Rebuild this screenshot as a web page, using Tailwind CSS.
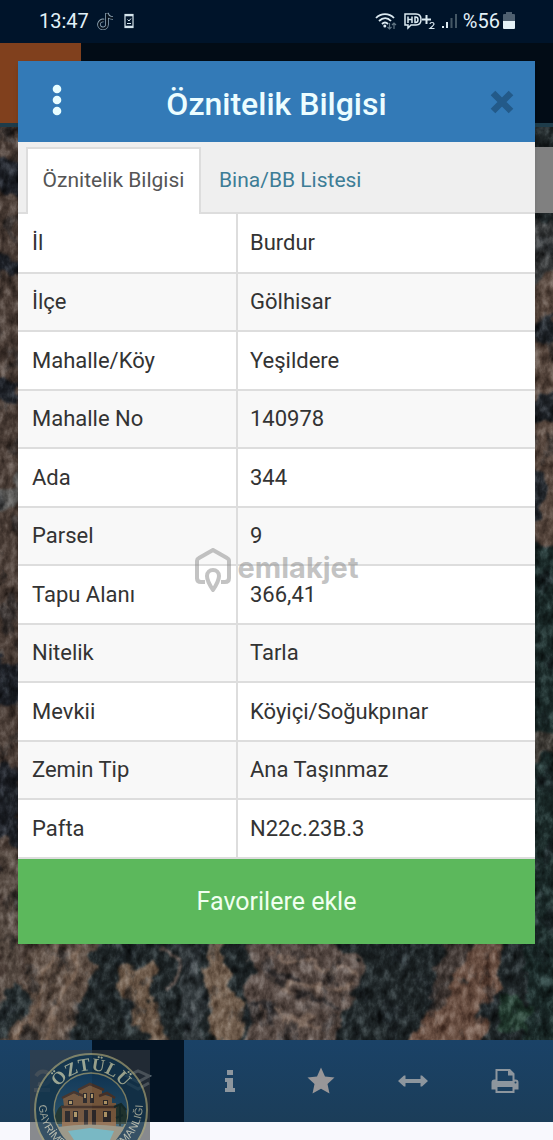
<!DOCTYPE html>
<html lang="tr">
<head>
    <meta charset="UTF-8">
    <meta name="viewport" content="width=device-width, initial-scale=1.0">
    <title>Öznitelik Bilgisi</title>
    <script src="https://cdn.jsdelivr.net/npm/@tailwindcss/browser@4"></script>
</head>
<body class="font-[Roboto,sans-serif] text-[#333]">

<div class="relative isolate flex min-h-screen flex-col overflow-hidden bg-[#25282a]">

    <!-- Uydu haritası -->
    <svg class="absolute inset-0 -z-10 h-full w-full" viewBox="0 0 553 1140" preserveAspectRatio="xMidYMid slice" aria-hidden="true">
        <defs>
            <filter id="rough" x="-10%" y="-10%" width="120%" height="120%" color-interpolation-filters="sRGB">
                <feTurbulence type="fractalNoise" baseFrequency="0.05" numOctaves="5" seed="4" result="n"/>
                <feDisplacementMap in="SourceGraphic" in2="n" scale="26" xChannelSelector="R" yChannelSelector="G"/>
                <feGaussianBlur stdDeviation="1"/>
            </filter>
            <filter id="grain" x="0" y="0" width="100%" height="100%" color-interpolation-filters="sRGB">
                <feTurbulence type="fractalNoise" baseFrequency="0.12 0.08" numOctaves="4" seed="9"/>
                <feColorMatrix type="matrix" values="0.9 0.9 0 0 -0.4  0.9 0.9 0 0 -0.4  0.9 0.9 0 0 -0.4  0 0 0 0 1"/>
            </filter>
            <filter id="shrubs" x="0" y="0" width="100%" height="100%" color-interpolation-filters="sRGB">
                <feTurbulence type="fractalNoise" baseFrequency="0.05 0.035" numOctaves="5" seed="21"/>
                <feColorMatrix type="matrix" values="0 0 0 0 0.1  0 0 0 0 0.12  0 0 0 0 0.14  6 0 0 0 -3.4"/>
            </filter>
        </defs>
        <rect width="553" height="1140" fill="#1f2628"/>
        <g filter="url(#rough)">
            <path d="M-20 120H40V1060H-20Z" fill="#4b3e37"/>
            <path d="M-10 150L25 165V200L-10 185ZM-10 250L30 262V275L-10 270ZM-10 375L22 385V400L-10 398ZM-10 655L22 665V700L-10 715ZM-10 760L20 770V850L-10 830Z" fill="#1c1f25"/>
            <path d="M-10 490L30 470V495L-10 515Z" fill="#5c5b59"/>
            <path d="M525 220H570V320L525 310Z" fill="#353738"/>
            <path d="M525 285L570 270V540L525 545Z" fill="#56463d"/>
            <path d="M525 330L565 315V345L525 340ZM525 400L560 390V425H525ZM525 470L545 480V520H525Z" fill="#202429"/>
            <path d="M525 545H570V1050H525Z" fill="#1a2928"/>
            <path d="M525 730H570V760H525Z" fill="#3d3a35"/>
            <path d="M0 850H18V980L0 1010Z" fill="#564a42"/>
            <path d="M35 930H98L88 985L65 1050H-5L20 990Z" fill="#5e4f45"/>
            <path d="M80 945L65 985L45 1045M55 940L45 985L15 1045" stroke="#7b6657" stroke-width="4" fill="none"/>
            <path d="M68 945L55 985L30 1045" stroke="#41362f" stroke-width="3" fill="none"/>
            <path d="M15 985L30 1000L10 1040H-5V1010Z" fill="#262e30"/>
            <path d="M118 965L155 962L150 1000L175 1045H145L136 1010L120 990Z" fill="#6d5a4a"/>
            <path d="M160 940L180 960L168 990" stroke="#665a55" stroke-width="5" fill="none"/>
            <path d="M182 940H202V1050H182Z" fill="#343b3e"/>
            <path d="M212 935H226V985L245 1000L240 1050H222L205 1000Z" fill="#725f4f"/>
            <path d="M248 940L310 935L370 965L350 1000L330 1050H250Z" fill="#5a4d47"/>
            <path d="M270 955L360 975M280 985L350 990M260 1010L320 1025" stroke="#7f6c60" stroke-width="4"/>
            <path d="M265 975L300 980M300 995L340 1010M255 1000L275 1020" stroke="#2d2929" stroke-width="6"/>
            <path d="M480 930H504L498 990L480 1010L485 1060H400L430 1010L455 985Z" fill="#694f42"/>
            <path d="M450 935L475 945L445 1000L425 1015Z" fill="#423935"/>
            <path d="M500 995L530 1000V1035H500Z" fill="#22392e"/>
        </g>
        <rect width="553" height="1140" filter="url(#shrubs)" opacity=".4"/>
        <rect width="553" height="1140" filter="url(#grain)" class="opacity-80 mix-blend-soft-light"/>
    </svg>

    <!-- Durum çubuğu -->
    <div class="flex h-[43px] items-center justify-between bg-[#00142a] pr-[38px] pb-0.5 pl-[39px] text-[#e2f1f8]">
        <div class="flex items-center gap-2">
            <time class="text-[20px] leading-6">13:47</time>
            <svg class="h-[18px] w-[18px]" viewBox="0 0 18 18" fill="none" aria-label="TikTok">
                <path d="M10 1V12.500A4 4 0 1 1 7 8.500M10 1C10.500 4 12.500 6 16 6" stroke="#8fa6b5" stroke-width="3.600"/>
                <path d="M10 1.500V12.500A4 4 0 1 1 7 8.700M10 2C10.500 4.300 12.500 6 16 6" stroke="#08131f" stroke-width="2"/>
            </svg>
            <svg class="h-4 w-3" viewBox="0 0 12 16" fill="none" stroke="#d5e5ed" aria-label="Cihaz">
                <rect x="2" y="1.500" width="8" height="13" stroke-width="1.200"/>
                <path d="M2 2.500H10M2 13.500H10" stroke-width="1.500"/>
                <path d="M4.500 6.500L6 8L8 5.500M4 10.500H8" stroke-width="1"/>
            </svg>
        </div>
        <div class="flex items-center gap-[6px]">
            <svg class="h-[18px] w-[22px]" viewBox="0 0 22 18" fill="none" aria-label="Wi-Fi">
                <path d="M1 6C6 .8 14 .8 19 6M4 9C8 5.200 12.500 5.200 16 9M7 12C9 10 11 10 13 12" stroke="#dceaf1" stroke-width="1.800"/>
                <circle cx="9.800" cy="14" r="1.500" fill="#dceaf1"/>
                <path d="M14.500 11V17M12.500 15L14.500 17L16.500 15M19 17V11M17 13L19 11L21 13" stroke="#607583" stroke-width="1.200"/>
            </svg>
            <svg class="h-[18px] w-8" viewBox="0 0 32 18" fill="none" stroke="#dceaf1" aria-label="HD+ 2">
                <path d="M2 2H13Q18 2 18 7.500Q18 13 13 13H8L5 16V13H2Z" stroke-width="1.500"/>
                <path d="M5 4.500V11M9 4.500V11M5 7.500H9M12 5V10.500H12.500Q15 10.500 15 7.700Q15 5 12.500 5Z" stroke-width="1.500"/>
                <path d="M23.500 3V12M19 7.500H28" stroke-width="2"/>
                <path d="M27 12Q27 10.500 29 10.500Q31 10.500 31 12Q31 13 27 16.500H31.500" stroke-width="1.200"/>
            </svg>
            <svg class="h-4 w-4" viewBox="0 0 16 16" aria-label="Sinyal">
                <path d="M1 13H3V15H1ZM5 9H7V15H5Z" fill="#dceaf1"/>
                <path d="M9.500 5H11.500V15H9.500ZM14 1H16V15H14Z" fill="#445765"/>
            </svg>
            <div class="flex items-center gap-[3px]">
                <span class="text-[20px] leading-6">%56</span>
                <svg class="h-[17px] w-3" viewBox="0 0 12 17" aria-label="Pil">
                    <path d="M3 0H9V2H11Q12 2 12 3V9H0V3Q0 2 1 2H3Z" fill="#4f6070"/>
                    <path d="M0 9H12V16Q12 17 11 17H1Q0 17 0 16Z" fill="#e4f1f6"/>
                </svg>
            </div>
        </div>
    </div>

    <!-- Arka plandaki uygulama başlığı ve arama kutusu -->
    <div class="flex h-[84px] border-b-4 border-[#1e3c4a] bg-[#020c16]">
        <div class="w-[81px] bg-[#80401d]"></div>
    </div>
    <div class="mt-5 h-[66px] w-8 self-end bg-[#808080]"></div>

    <!-- Alt menü -->
    <nav class="mt-auto grid h-[82px] grid-cols-6 bg-linear-to-b from-[#1a4267] to-[#1b3d59] pr-0.5 text-[#8d969e]">
        <button type="button" aria-label="Harita" class="flex items-center justify-center text-[#4f6374]">
            <svg class="h-7 w-7" viewBox="0 0 28 28" fill="none" stroke="currentColor" stroke-width="4"><path d="M4 9Q8 3 14 5Q21 8 17 14Q13 19 6 17M2 23H18"/></svg>
        </button>
        <button type="button" aria-label="Katmanlar" class="flex items-center justify-center bg-[#031323] text-[#5c6a73]">
            <svg class="h-7 w-7" viewBox="0 0 28 28" fill="none" stroke="currentColor" stroke-width="3"><path d="M3 9L14 4L25 9L14 15ZM3 16L14 22L25 16"/></svg>
        </button>
        <button type="button" aria-label="Bilgi" class="flex items-center justify-center">
            <svg class="h-6 w-3" viewBox="0 0 12 24" fill="currentColor"><path d="M3 1H9V6H3ZM1 9H9V19H11V23H1V19H3V13H1Z"/></svg>
        </button>
        <button type="button" aria-label="Favoriler" class="flex items-center justify-center">
            <svg class="h-7 w-7" viewBox="0 0 28 28" fill="#989698"><path d="M14 .5L18 9.500L27.500 10.500L20.500 17L22.500 26.500L14 21.700L5.500 26.500L7.500 17L.5 10.500L10 9.500Z"/></svg>
        </button>
        <button type="button" aria-label="Ölç" class="flex items-center justify-center">
            <svg class="h-3 w-[30px]" viewBox="0 0 30 12" fill="currentColor"><path d="M0 6L6 .5H7.500V4H22.500V.5H24L30 6L24 11.500H22.500V8H7.500V11.500H6Z"/></svg>
        </button>
        <button type="button" aria-label="Yazdır" class="flex items-center justify-center">
            <svg class="h-6 w-7" viewBox="0 0 28 24" fill="currentColor" fill-rule="evenodd"><path d="M4.500 0H19L23.500 4.500V10.500H24.500Q27.500 10.500 27.500 13.500V20.500H23.500V24H4.500V20.500H.5V13.500Q.5 10.500 3.500 10.500H4.500ZM6.500 2V12H21.500V6.500H17V2ZM6.500 18V22H21.500V18ZM24.500 12.500A1 1 0 1 0 24.500 14.500A1 1 0 1 0 24.500 12.500Z"/></svg>
        </button>
    </nav>
    <div class="h-[18px] bg-[#f8f8fd]"></div>

    <!-- Öznitelik penceresi -->
    <section role="dialog" aria-labelledby="dialogTitle" class="absolute inset-x-[18px] top-[61px] shadow-md">
        <header class="flex h-[81px] items-center justify-between bg-[#337ab7] px-[17px]">
            <button type="button" aria-label="Menü" class="flex w-11 justify-center pb-1 text-[#e8fdff]">
                <svg class="h-8 w-2.5" viewBox="0 0 10 32" fill="currentColor"><circle cx="5" cy="5" r="4.300"/><circle cx="5" cy="16" r="4.300"/><circle cx="5" cy="27" r="4.300"/></svg>
            </button>
            <h1 id="dialogTitle" class="pt-1 text-[32px] leading-9 font-medium text-[#ecfdff]">Öznitelik Bilgisi</h1>
            <button type="button" aria-label="Kapat" class="flex w-11 justify-end pr-1 text-[#235a89]">
                <svg class="h-6 w-6" viewBox="0 0 24 24" stroke="currentColor" stroke-width="6.500"><path d="M3 3L21 21M21 3L3 21"/></svg>
            </button>
        </header>

        <div role="tablist" class="flex h-[72px] items-end border-b-2 border-[#ddd] bg-[#efefef] pl-2 text-[21px] leading-7">
            <button type="button" role="tab" aria-selected="true" class="-mb-0.5 h-[67px] min-w-[175px] border-2 border-b-0 border-[#ddd] bg-white pb-1 text-[#555]">Öznitelik Bilgisi</button>
            <button type="button" role="tab" aria-selected="false" class="h-[65px] px-[18px] text-[#3d7d96]">Bina/BB Listesi</button>
        </div>

        <table class="w-full table-fixed bg-white text-left text-[22px] leading-7 [&_td]:pl-3 [&_th]:w-[219px] [&_th]:border-r-2 [&_th]:border-[#ddd] [&_th]:pl-[14px] [&_th]:font-normal [&_tr]:border-b-2 [&_tr]:border-[#ddd]">
            <tbody>
                <tr class="h-[59px]"><th scope="row">İl</th><td>Burdur</td></tr>
                <tr class="h-[58px] bg-[#f8f8f8]"><th scope="row">İlçe</th><td>Gölhisar</td></tr>
                <tr class="h-[59px]"><th scope="row">Mahalle/Köy</th><td>Yeşildere</td></tr>
                <tr class="h-[58px] bg-[#f8f8f8]"><th scope="row">Mahalle No</th><td>140978</td></tr>
                <tr class="h-[59px]"><th scope="row">Ada</th><td>344</td></tr>
                <tr class="h-[58px] bg-[#f8f8f8]"><th scope="row">Parsel</th><td>9</td></tr>
                <tr class="h-[59px]"><th scope="row">Tapu Alanı</th><td>366,41</td></tr>
                <tr class="h-[58px] bg-[#f8f8f8]"><th scope="row">Nitelik</th><td>Tarla</td></tr>
                <tr class="h-[59px]"><th scope="row">Mevkii</th><td>Köyiçi/Soğukpınar</td></tr>
                <tr class="h-[58px] bg-[#f8f8f8]"><th scope="row">Zemin Tip</th><td>Ana Taşınmaz</td></tr>
                <tr class="h-[59px]"><th scope="row">Pafta</th><td>N22c.23B.3</td></tr>
            </tbody>
        </table>

        <button type="button" class="block h-[85px] w-full bg-[#5cb85c] text-[25px] leading-8 text-[#f0fff0]">Favorilere ekle</button>
    </section>

    <!-- Filigran -->
    <div class="pointer-events-none absolute top-1/2 left-1/2 flex -translate-x-1/2 -translate-y-1/2 items-center gap-[7px] text-[#888]/50">
        <svg class="h-11 w-9" viewBox="0 0 36 44" fill="none" stroke="currentColor" stroke-width="4" stroke-linejoin="round">
            <path d="M10 34H6Q2 34 2 30V13Q2 11 4 10L18 2L32 10Q34 11 34 13V30Q34 34 30 34H26"/>
            <path d="M18 42Q12 33 12 28A6 6 0 0 1 24 28Q24 33 18 42Z"/>
        </svg>
        <span class="pb-1 font-[Inter,sans-serif] text-[29px] leading-8 font-bold">emlakjet</span>
    </div>

    <!-- Emlak ofisi logosu -->
    <svg class="pointer-events-none absolute bottom-0 left-[30px] h-[90px] w-[120px] opacity-85" viewBox="0 0 120 90" role="img" aria-label="Öztülü Gayrimenkul Danışmanlığı">
        <defs>
            <path id="topArc" d="M21.500 60A39.500 39.500 0 0 1 100.500 60"/>
            <path id="bottomArc" d="M9 54A52 52 0 0 0 113 54"/>
            <linearGradient id="sky" x1="0" y1="0" x2="0" y2="1">
                <stop offset="0" stop-color="#12395a"/>
                <stop offset="1" stop-color="#3a6474"/>
            </linearGradient>
        </defs>
        <rect width="120" height="90" fill="#3a3d42" opacity=".65"/>
        <rect y="72" width="120" height="18" fill="#6f7175" opacity=".6"/>
        <circle cx="61" cy="60" r="56" fill="#15354b" stroke="#8f8e6c" stroke-width="2"/>
        <circle cx="61" cy="60" r="37" fill="url(#sky)" stroke="#8f8e6c" stroke-width="1.500"/>
        <path d="M25 66Q30 50 38 58L86 56Q94 50 97 66L96 74H27Z" fill="#25382f"/>
        <path d="M33 48L44 43L49 46V40L60 35L72 40V44L82 47V53H86V77H32V57H34Z" fill="#86603f"/>
        <path d="M32 48L44 42L56 47M48 40L60 34L74 40M69 46L77 43L85 48M31 57H87" stroke="#503628" stroke-width="2.500" fill="none"/>
        <path d="M38 50H43V55H38ZM53 43H57V53H53ZM60 43H64V53H60ZM73 50H78V55H73ZM35 61H40V72H35ZM43 61H48V72H43ZM54 60H58V75H54ZM62 60H66V75H62ZM73 61H81V72H73Z" fill="#332b29"/>
        <path d="M39 51H42V54H39ZM54 44H56V48H54ZM61 44H63V48H61ZM74 51H77V54H74ZM44 62H47V67H44ZM74 62H77V67H74Z" fill="#c9a86f"/>
        <path d="M28 77Q58 72 94 77Q91 84 86 90H36Q30 84 28 77Z" fill="#8e8977"/>
        <path d="M38 81L60 78L84 81L80 90H44Z" fill="#63aebb"/>
        <path d="M84 57L91 54L96 60M90 55V76M86 68L93 65" stroke="#182c29" stroke-width="2" fill="none"/>
        <text font-size="18" font-weight="700" fill="#b2b89d" class="font-['Liberation_Serif',serif]" text-anchor="middle"><textPath href="#topArc" startOffset="50%">ÖZTÜLÜ</textPath></text>
        <text font-size="11" fill="#b0b3a2" class="font-['Liberation_Sans',sans-serif]" text-anchor="middle"><textPath href="#bottomArc" startOffset="50%">GAYRİMENKUL DANIŞMANLIĞI</textPath></text>
    </svg>
</div>

</body>
</html>
